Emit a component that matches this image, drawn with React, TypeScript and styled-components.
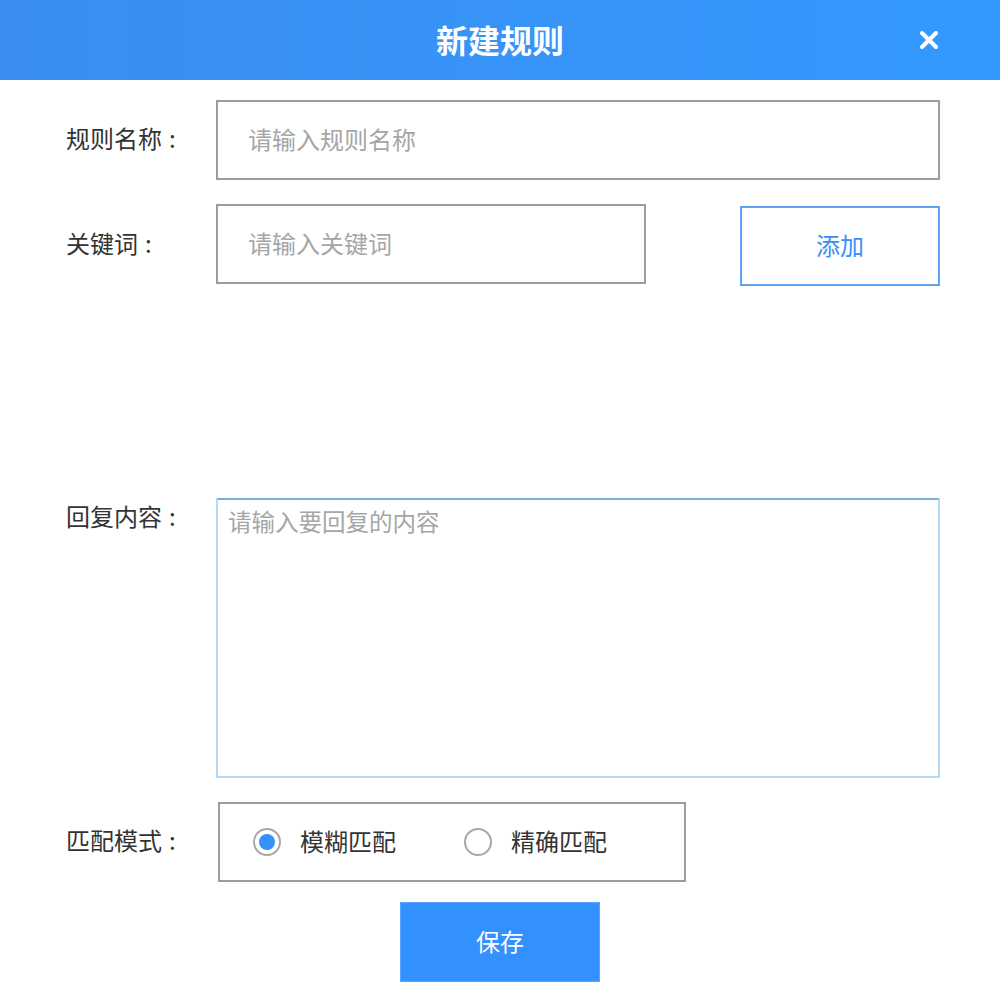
import styled, { createGlobalStyle } from "styled-components";

const GlobalStyle = createGlobalStyle`
  body {
    margin: 0;
    background: #fff;
    font-family: "Noto Sans CJK SC", "Liberation Sans", sans-serif;
  }
`;

const Dialog = styled.div`
  width: 1000px;
  height: 1000px;
  background: #fff;
`;

const Header = styled.header`
  height: 80px;
  display: grid;
  grid-template-columns: 1fr auto 1fr;
  align-items: center;
  background: linear-gradient(to right, #3b8eef, #3399ff);
  color: #fff;
`;

const Title = styled.h1`
  grid-column: 2;
  margin: 0 0 2px;
  font-size: 32px;
  font-weight: 700;
`;

const Close = styled.button`
  justify-self: end;
  margin-right: 58px;
  width: 26px;
  height: 26px;
  padding: 0;
  border: none;
  background: transparent;
  display: flex;
  align-items: center;
  justify-content: center;
  cursor: pointer;
`;

const Form = styled.form`
  padding: 20px 60px 0 66px;
  display: flex;
  flex-direction: column;
`;

const Row = styled.div<{ $top?: number; $align?: string }>`
  display: flex;
  align-items: ${(p) => p.$align || "center"};
  margin-top: ${(p) => p.$top || 0}px;
`;

const Label = styled.label<{ $pad?: number }>`
  flex: 0 0 150px;
  align-self: ${(p) => (p.$pad ? "flex-start" : "center")};
  font-size: 24px;
  line-height: 26px;
  color: #333;
  padding-top: ${(p) => p.$pad || 0}px;
  padding-bottom: ${(p) => (p.$pad ? 0 : 4)}px;
`;

const Colon = styled.span`
  padding-left: 7px;
`;

const TextInput = styled.input<{ $width: number }>`
  box-sizing: border-box;
  width: ${(p) => p.$width}px;
  height: 80px;
  border: 2px solid #9d9d9d;
  padding: 0 30px 4px;
  font-family: inherit;
  font-size: 24px;
  color: #333;
  outline: none;
  &::placeholder {
    color: #a6a6a6;
  }
`;

const AddButton = styled.button`
  box-sizing: border-box;
  width: 200px;
  height: 80px;
  margin-left: auto;
  margin-top: 2px;
  padding-bottom: 4px;
  border: 2px solid #5ea3f3;
  background: #fff;
  color: #3a8ef5;
  font-family: inherit;
  font-size: 24px;
`;

const Spacer = styled.div`
  height: 212px;
`;

const TextArea = styled.textarea`
  box-sizing: border-box;
  width: 724px;
  height: 280px;
  border: 2px solid #b4daf3;
  border-top-color: #7ab1dc;
  border-radius: 2px;
  padding: 7px 10px;
  resize: none;
  font-family: inherit;
  font-size: 23.5px;
  line-height: 28px;
  color: #333;
  outline: none;
  &::placeholder {
    color: #a6a6a6;
  }
`;

const RadioBox = styled.div`
  box-sizing: border-box;
  width: 468px;
  height: 80px;
  margin-left: 2px;
  border: 2px solid #9d9d9d;
  display: flex;
  align-items: center;
  padding-left: 33px;
`;

const Option = styled.label<{ $gap?: number }>`
  display: flex;
  align-items: center;
  gap: 19px;
  margin-left: ${(p) => p.$gap || 0}px;
  font-size: 24px;
  line-height: 28px;
  color: #333;
`;

const OptionText = styled.span`
  padding-bottom: 3px;
`;

const Radio = styled.span<{ $checked?: boolean }>`
  box-sizing: border-box;
  width: 28px;
  height: 28px;
  border-radius: 50%;
  border: 2px solid #a8a8a8;
  display: flex;
  align-items: center;
  justify-content: center;
  &::after {
    content: "";
    width: 16px;
    height: 16px;
    border-radius: 50%;
    background: ${(p) => (p.$checked ? "#3390ff" : "transparent")};
  }
`;

const SaveButton = styled.button`
  align-self: flex-start;
  margin: 20px 0 0 334px;
  box-sizing: border-box;
  width: 200px;
  height: 80px;
  padding-bottom: 4px;
  border: 1px solid #5aa6ff;
  background: #3390ff;
  color: #fff;
  font-family: inherit;
  font-size: 24px;
`;

export default function App() {
  return (
    <Dialog>
      <GlobalStyle />
      <Header>
        <Title>新建规则</Title>
        <Close type="button" aria-label="关闭">
          <svg width="20" height="20" viewBox="0 0 20 20">
            <path d="M3 3 L17 17 M17 3 L3 17" stroke="#fff" strokeWidth="4" strokeLinecap="round" />
          </svg>
        </Close>
      </Header>
      <Form>
        <Row>
          <Label>
            规则名称<Colon>:</Colon>
          </Label>
          <TextInput $width={724} placeholder="请输入规则名称" />
        </Row>
        <Row $top={24} $align="flex-start">
          <Label>
            关键词<Colon>:</Colon>
          </Label>
          <TextInput $width={430} placeholder="请输入关键词" />
          <AddButton type="button">添加</AddButton>
        </Row>
        <Spacer />
        <Row $align="flex-start">
          <Label $pad={5}>
            回复内容<Colon>:</Colon>
          </Label>
          <TextArea placeholder="请输入要回复的内容" />
        </Row>
        <Row $top={24}>
          <Label>
            匹配模式<Colon>:</Colon>
          </Label>
          <RadioBox>
            <Option>
              <Radio $checked />
              <OptionText>模糊匹配</OptionText>
            </Option>
            <Option $gap={68}>
              <Radio />
              <OptionText>精确匹配</OptionText>
            </Option>
          </RadioBox>
        </Row>
        <SaveButton type="button">保存</SaveButton>
      </Form>
    </Dialog>
  );
}
